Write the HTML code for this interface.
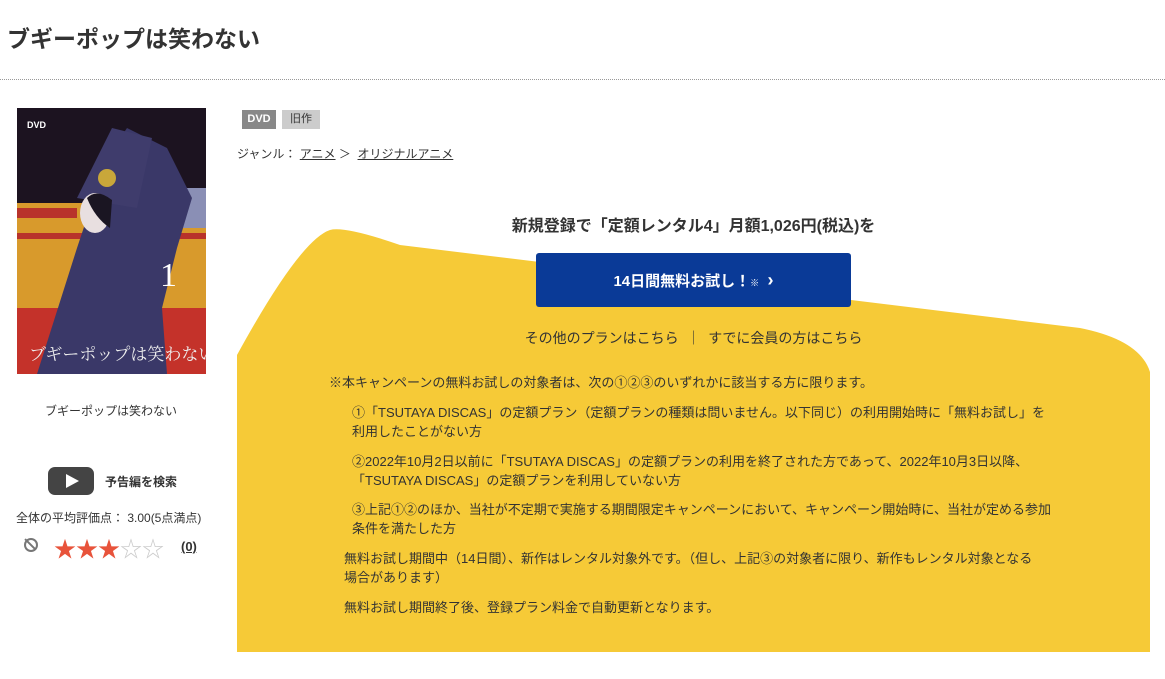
<!DOCTYPE html>
<html><head><meta charset="utf-8"><style>
body{margin:0;width:1165px;height:679px;background:#fff;font-family:"Liberation Sans","Noto Sans CJK JP",sans-serif;color:#333;position:relative;overflow:hidden}
.a{position:absolute}
h1{position:absolute;left:7px;top:20px;margin:0;font-size:23px;font-weight:bold;color:#333}
.hr{position:absolute;left:0;top:79px;width:1165px;border-top:1px dotted #999}
.t{font-size:13px;color:#333}
.p{font-size:13px;line-height:19px;width:700px}
u{text-decoration:underline}
</style></head><body>
<h1>ブギーポップは笑わない</h1>
<div class="hr"></div>
<svg class="a" style="left:17px;top:108px" width="189" height="266" viewBox="0 0 189 266">
<rect width="189" height="266" fill="#1c1320"/>
<rect x="0" y="95" width="189" height="171" fill="#d89a2c"/>
<rect x="0" y="200" width="189" height="66" fill="#c4322a"/>
<rect x="0" y="100" width="60" height="10" fill="#b8332b"/>
<rect x="0" y="125" width="189" height="6" fill="#b8332b"/>
<rect x="140" y="80" width="49" height="40" fill="#8a8fb5"/>
<polygon points="20,266 60,140 70,110 90,50 110,20 150,40 175,90 160,140 145,200 150,266" fill="#3a3868"/>
<polygon points="60,90 95,20 135,30 120,100" fill="#3f3c6c"/>
<circle cx="90" cy="70" r="9" fill="#c9a73a"/>
<ellipse cx="78" cy="105" rx="15" ry="20" fill="#e8dfe0"/>
<path d="M70,90 Q80,80 95,92 L93,120 Q78,110 70,90Z" fill="#1a1522"/>
<text x="143" y="178" fill="#fff" font-size="34" font-family="Liberation Serif">1</text>
<text x="12" y="252" fill="#eee" font-size="17" font-family="Noto Serif CJK SC">ブギーポップは笑わない</text>
<text x="10" y="20" fill="#fff" font-size="9" font-weight="bold">DVD</text>
</svg>
<div class="a t" style="left:45px;top:402px;font-size:12px">ブギーポップは笑わない</div>
<div class="a" style="left:48px;top:467px;width:46px;height:28px;background:#444;border-radius:7px"></div>
<div class="a" style="left:66px;top:474px;width:0;height:0;border-left:13px solid #fff;border-top:7px solid transparent;border-bottom:7px solid transparent"></div>
<div class="a t" style="left:105px;top:473px;font-size:12px;font-weight:bold">予告編を検索</div>
<div class="a t" style="left:16px;top:509px;font-size:12px">全体の平均評価点： 3.00(5点満点)</div>
<div class="a" style="left:24px;top:538px;width:10px;height:10px;border:2px solid #777;border-radius:50%"></div>
<div class="a" style="left:29px;top:537px;width:2px;height:14px;background:#777;transform:rotate(-45deg)"></div>
<div class="a" style="left:54px;top:532px;font-size:22px;color:#e8533b;letter-spacing:0px">★★★<span style="color:#ccc">☆☆</span></div>
<div class="a t" style="left:181px;top:539px;font-weight:bold"><u>(0)</u></div>
<div class="a" style="left:242px;top:110px;width:34px;height:19px;background:#888;color:#fff;font-size:11px;font-weight:bold;text-align:center;line-height:19px">DVD</div>
<div class="a" style="left:282px;top:110px;width:38px;height:19px;background:#ccc;color:#333;font-size:11px;text-align:center;line-height:19px">旧作</div>
<div class="a t" style="left:237px;top:145px;font-size:12px">ジャンル： <u>アニメ</u> ＞ &nbsp;<u>オリジナルアニメ</u></div>
<svg class="a" style="left:0;top:0" width="1165" height="679">
<path d="M237,355 Q300,240 330,230 Q345,226 400,245 L1080,328 Q1140,340 1150,372 L1150,652 L237,652 Z" fill="#f6ca37"/>
</svg>
<div class="a" style="left:237px;top:212px;width:913px;text-align:center;font-size:16px;font-weight:bold;color:#333">新規登録で「定額レンタル4」月額1,026円(税込)を</div>
<div class="a" style="left:536px;top:253px;width:315px;height:54px;background:#0a3a97;border-radius:3px;color:#fff;font-weight:bold;font-size:15px;text-align:center;line-height:54px">14日間無料お試し！<span style="font-size:9px">※</span> &nbsp;<span style="font-size:18px">&#x203A;</span></div>
<div class="a" style="left:237px;top:328px;width:913px;text-align:center;font-size:14px;color:#333">その他のプランはこちら &nbsp;｜ &nbsp;すでに会員の方はこちら</div>
<div class="a t p" style="left:329px;top:373px;width:760px">※本キャンペーンの無料お試しの対象者は、次の①②③のいずれかに該当する方に限ります。</div>
<div class="a t p" style="left:352px;top:403px">①「TSUTAYA DISCAS」の定額プラン（定額プランの種類は問いません。以下同じ）の利用開始時に「無料お試し」を利用したことがない方</div>
<div class="a t p" style="left:352px;top:452px">②2022年10月2日以前に「TSUTAYA DISCAS」の定額プランの利用を終了された方であって、2022年10月3日以降、「TSUTAYA DISCAS」の定額プランを利用していない方</div>
<div class="a t p" style="left:352px;top:500px">③上記①②のほか、当社が不定期で実施する期間限定キャンペーンにおいて、キャンペーン開始時に、当社が定める参加条件を満たした方</div>
<div class="a t p" style="left:344px;top:549px;width:700px">無料お試し期間中（14日間）、新作はレンタル対象外です。（但し、上記③の対象者に限り、新作もレンタル対象となる場合があります）</div>
<div class="a t p" style="left:344px;top:598px">無料お試し期間終了後、登録プラン料金で自動更新となります。</div>
</body></html>
